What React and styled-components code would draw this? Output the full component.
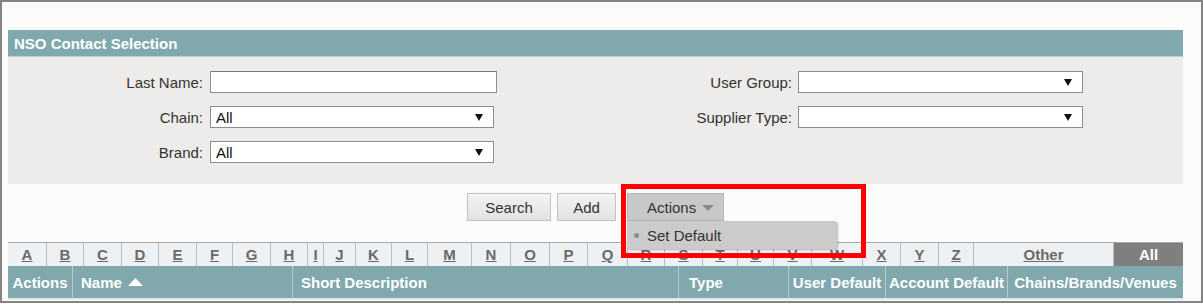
import React from "react";
import styled, { createGlobalStyle } from "styled-components";

const GlobalStyle = createGlobalStyle`
  body {
    margin: 0;
    font-family: "Liberation Sans", Arial, sans-serif;
    background: #ffffff;
  }
`;

const Frame = styled.div`
  position: relative;
  box-sizing: border-box;
  width: 1203px;
  height: 303px;
  border: 2px solid #848484;
  background: #fbfbfb;
  padding: 28px 0 0 6px;
  overflow: hidden;
`;

const Panel = styled.div`
  width: 1175px;
`;

const PanelTitle = styled.div`
  height: 26px;
  line-height: 27px;
  background: #80a8ad;
  border-bottom: 1px solid #b7cdd0;
  color: #ffffff;
  font-weight: 700;
  font-size: 15px;
  padding-left: 6px;
`;

const FormArea = styled.div`
  box-sizing: border-box;
  height: 127px;
  background: #edecea;
  padding-top: 14px;
  display: flex;
`;

const FieldColumn = styled.div`
  display: flex;
  flex-direction: column;
  gap: 13px;
  margin-left: ${(p) => p.$offset || 0}px;
`;

const FieldRow = styled.div`
  display: flex;
  align-items: center;
  height: 22px;
`;

const Label = styled.label`
  box-sizing: border-box;
  flex: none;
  width: ${(p) => p.$width}px;
  text-align: right;
  font-size: 15px;
  color: #333333;
  padding-right: ${(p) => p.$gap}px;
`;

const TextInput = styled.div`
  box-sizing: border-box;
  width: ${(p) => p.$width}px;
  height: 22px;
  background: #ffffff;
  border: 1px solid #8e8e8e;
  border-top-color: #7a7a7a;
`;

const Select = styled.div`
  box-sizing: border-box;
  width: ${(p) => p.$width}px;
  height: 22px;
  background: #ffffff;
  border: 1px solid #8e8e8e;
  display: flex;
  align-items: center;
  justify-content: space-between;
  padding: 0 10px 0 5px;
  font-size: 15px;
  color: #111111;
`;

const Arrow = styled.span`
  width: 0;
  height: 0;
  border-left: 4px solid transparent;
  border-right: 4px solid transparent;
  border-top: 7px solid #111111;
`;

const ButtonRow = styled.div`
  display: flex;
  justify-content: center;
  margin-top: 9px;
  height: 28px;
`;

const Button = styled.div`
  box-sizing: border-box;
  width: ${(p) => p.$width}px;
  height: 28px;
  margin-left: ${(p) => p.$gap || 0}px;
  display: flex;
  align-items: center;
  justify-content: center;
  font-size: 15px;
  color: #333333;
  border: 1px solid #c2c2c2;
  background: linear-gradient(#f3f3f3, #e2e2e2);
`;

const ActionsWrap = styled.div`
  position: relative;
  margin-left: 11px;
`;

const ActionsButton = styled(Button)`
  background: #c8c8c8;
  border-color: #b4b4b4;
  justify-content: flex-start;
  gap: 6px;
  padding-left: 19px;
`;

const Caret = styled.span`
  width: 0;
  height: 0;
  margin-top: 2px;
  border-left: 6px solid transparent;
  border-right: 6px solid transparent;
  border-top: 6px solid #8a8a8a;
`;

const Menu = styled.div`
  position: absolute;
  top: 28px;
  left: 0;
  z-index: 2;
  box-sizing: border-box;
  width: 210px;
  height: 28px;
  background: #cbcbcb;
  border-radius: 0 3px 3px 3px;
  box-shadow: 1px 1px 2px rgba(0, 0, 0, 0.25);
  display: flex;
  align-items: center;
  padding-left: 7px;
  gap: 8px;
  font-size: 15px;
  color: #333333;
`;

const Dot = styled.span`
  width: 5px;
  height: 5px;
  border-radius: 50%;
  background: #8c8c8c;
`;

const LetterBar = styled.div`
  display: flex;
  margin-top: 21px;
  height: 24px;
  border-top: 1px solid #a9a9a9;
  box-sizing: border-box;
`;

const LetterCell = styled.div`
  box-sizing: border-box;
  width: ${(p) => p.$width}px;
  border-left: ${(p) => (p.$first ? "none" : "1px solid #bdbdbd")};
  background: ${(p) => (p.$active ? "#7f7f7f" : "#edf1f4")};
  color: ${(p) => (p.$active ? "#ffffff" : "#6a6a6a")};
  text-decoration: ${(p) => (p.$active ? "none" : "underline")};
  font-size: 15px;
  font-weight: 700;
  display: flex;
  align-items: center;
  justify-content: center;
`;

const HeaderRow = styled.div`
  display: grid;
  grid-template-columns: 64px 220px 386px 110px 97px 122px 1fr;
  height: 32px;
  background: #80a8ad;
  border-bottom: 2px solid #dfe7e8;
`;

const HeaderCell = styled.div`
  display: flex;
  align-items: center;
  justify-content: ${(p) => (p.$center ? "center" : "flex-start")};
  gap: 6px;
  padding-left: ${(p) => (p.$center ? 0 : p.$pad)}px;
  border-left: ${(p) => (p.$first ? "none" : "1px solid #b5cbce")};
  color: #ffffff;
  font-weight: 700;
  font-size: 15px;
  white-space: nowrap;
`;

const Highlight = styled.div`
  position: absolute;
  left: 619px;
  top: 182px;
  width: 245px;
  height: 74px;
  box-sizing: border-box;
  border: 5px solid #ff0000;
  z-index: 3;
  pointer-events: none;
`;

const letters = [
  ["A", 38], ["B", 37], ["C", 38], ["D", 37], ["E", 38], ["F", 36], ["G", 38],
  ["H", 37], ["I", 16], ["J", 32], ["K", 36], ["L", 36], ["M", 44], ["N", 39],
  ["O", 39], ["P", 38], ["Q", 40], ["R", 37], ["S", 38], ["T", 35], ["U", 36],
  ["V", 38], ["W", 51], ["X", 38], ["Y", 38], ["Z", 35], ["Other", 140], ["All", 70],
];

const SortUp = () => (
  <svg width="15" height="8" viewBox="0 0 15 8">
    <path d="M0 8 L7.5 0 L15 8 Z" fill="#ffffff" />
  </svg>
);

export default function App() {
  return (
    <>
      <GlobalStyle />
      <Frame>
        <Panel>
          <PanelTitle>NSO Contact Selection</PanelTitle>
          <FormArea>
            <FieldColumn>
              <FieldRow>
                <Label $width={202} $gap={7}>Last Name:</Label>
                <TextInput $width={287} />
              </FieldRow>
              <FieldRow>
                <Label $width={202} $gap={7}>Chain:</Label>
                <Select $width={284}>
                  All
                  <Arrow />
                </Select>
              </FieldRow>
              <FieldRow>
                <Label $width={202} $gap={7}>Brand:</Label>
                <Select $width={284}>
                  All
                  <Arrow />
                </Select>
              </FieldRow>
            </FieldColumn>
            <FieldColumn $offset={100}>
              <FieldRow>
                <Label $width={201} $gap={6}>User Group:</Label>
                <Select $width={285}>
                  <span />
                  <Arrow />
                </Select>
              </FieldRow>
              <FieldRow>
                <Label $width={201} $gap={6}>Supplier Type:</Label>
                <Select $width={285}>
                  <span />
                  <Arrow />
                </Select>
              </FieldRow>
            </FieldColumn>
          </FormArea>

          <ButtonRow>
            <Button $width={84}>Search</Button>
            <Button $width={59} $gap={6}>Add</Button>
            <ActionsWrap>
              <ActionsButton $width={97}>
                Actions
                <Caret />
              </ActionsButton>
              <Menu>
                <Dot />
                Set Default
              </Menu>
            </ActionsWrap>
          </ButtonRow>

          <LetterBar>
            {letters.map(([l, w], i) => (
              <LetterCell key={l} $width={w} $first={i === 0} $active={l === "All"}>
                {l}
              </LetterCell>
            ))}
          </LetterBar>

          <HeaderRow>
            <HeaderCell $first $center>Actions</HeaderCell>
            <HeaderCell $pad={8}>
              Name <SortUp />
            </HeaderCell>
            <HeaderCell $pad={8}>Short Description</HeaderCell>
            <HeaderCell $pad={10}>Type</HeaderCell>
            <HeaderCell $center>User Default</HeaderCell>
            <HeaderCell $center>Account Default</HeaderCell>
            <HeaderCell $center>Chains/Brands/Venues</HeaderCell>
          </HeaderRow>
        </Panel>
        <Highlight />
      </Frame>
    </>
  );
}
